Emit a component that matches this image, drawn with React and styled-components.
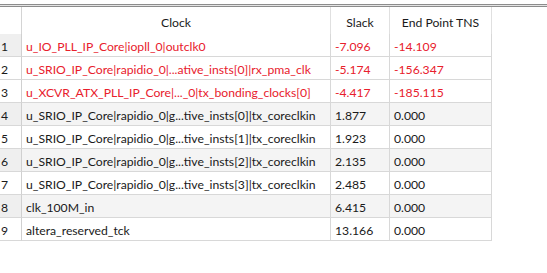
import React from 'react'
import styled, { createGlobalStyle } from 'styled-components'

const Global = createGlobalStyle`
body {
  margin: 0;
  background: #ffffff;
  font-family: Lato, "Noto Sans", sans-serif;
  font-size: 12.2px;
  color: #1a1a1a;
}
`

const Page = styled.div`
width: 547px;
height: 273px;
overflow: hidden;
background: #ffffff;
`

const Divider = styled.div`
margin-top: 4px;
height: 1px;
border-top: 1px solid #8c8c8c;
border-bottom: 1px solid #8c8c8c;
background: #e4e4e4;
`

const Table = styled.div`
width: 492px;
display: grid;
grid-template-columns: 22px 309px 59px 102px;
`

const Head = styled.div`
height: 27px;
box-sizing: border-box;
border-right: 1px solid ${({first}) => first ? '#d4d4d4' : '#e0e0e0'};
display: flex;
align-items: center;
justify-content: center;
padding-top: 3px;
`

const Cell = styled.div`
height: 23px;
box-sizing: border-box;
border-right: 1px solid #d8d8d8;
border-bottom: 1px solid #d8d8d8;
background: ${({shade}) => shade ? '#f4f4f4' : '#ffffff'};
color: ${({bad}) => bad ? '#e8202c' : '#1a1a1a'};
display: flex;
align-items: center;
padding-top: 2px;
padding-left: ${({num}) => num ? '1px' : '4px'};
white-space: nowrap;
overflow: hidden;
`

const NumCell = styled(Cell)`
border-right-color: #d0d0d0;
background: ${({shade}) => shade ? '#efefef' : '#ffffff'};
color: #1a1a1a;
`

const rows = [
  ['u_IO_PLL_IP_Core|iopll_0|outclk0', '-7.096', '-14.109'],
  ['u_SRIO_IP_Core|rapidio_0|...ative_insts[0]|rx_pma_clk', '-5.174', '-156.347'],
  ['u_XCVR_ATX_PLL_IP_Core|..._0|tx_bonding_clocks[0]', '-4.417', '-185.115'],
  ['u_SRIO_IP_Core|rapidio_0|g...tive_insts[0]|tx_coreclkin', '1.877', '0.000'],
  ['u_SRIO_IP_Core|rapidio_0|g...tive_insts[1]|tx_coreclkin', '1.923', '0.000'],
  ['u_SRIO_IP_Core|rapidio_0|g...tive_insts[2]|tx_coreclkin', '2.135', '0.000'],
  ['u_SRIO_IP_Core|rapidio_0|g...tive_insts[3]|tx_coreclkin', '2.485', '0.000'],
  ['clk_100M_in', '6.415', '0.000'],
  ['altera_reserved_tck', '13.166', '0.000'],
]

const App = () => {
  return (
    <Page>
      <Global />
      <Divider />
      <Table>
        <Head first />
        <Head>Clock</Head>
        <Head>Slack</Head>
        <Head>End Point TNS</Head>
        {rows.map(([clock, slack, tns], i) => {
          const n = i + 1
          const bad = slack.startsWith('-')
          const shade = !bad && n % 2 === 0
          return (
            <React.Fragment key={n}>
              <NumCell num shade={shade || n === 1}>{n}</NumCell>
              <Cell bad={bad} shade={shade}>{clock}</Cell>
              <Cell bad={bad} shade={shade}>{slack}</Cell>
              <Cell bad={bad} shade={shade}>{tns}</Cell>
            </React.Fragment>
          )
        })}
      </Table>
    </Page>
  )
}

export default App
